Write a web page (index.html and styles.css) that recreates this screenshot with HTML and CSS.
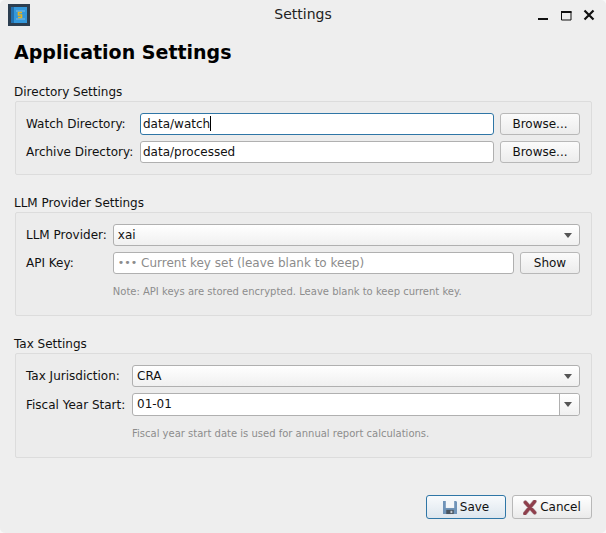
FILE: index.html
```html
<!DOCTYPE html>
<html lang="en">
<head>
  <meta charset="UTF-8">
  <meta name="viewport" content="width=device-width, initial-scale=1.0">
  <title>Settings</title>
  <link rel="stylesheet" href="styles.css">
</head>
<body>
  <div class="window">

    <div class="titlebar">
      <svg class="app-icon" width="22" height="22" viewBox="0 0 22 22">
        <rect width="22" height="22" fill="#2c3e50"/>
        <rect x="3" y="3" width="16" height="16" fill="#3498db"/>
        <rect x="3" y="3" width="3" height="16" fill="#2271b0"/>
        <path d="M8 7h9M8 15h9" stroke="#7dbce8" stroke-width="1"/>
        <path d="M14 8.500h-3.500v2.500h3v2.500h-3.500" fill="none" stroke="#e6b422" stroke-width="1.600"/>
      </svg>
      <span class="titlebar-title">Settings</span>
      <div class="window-buttons">
        <svg width="12" height="12" viewBox="0 0 12 12"><rect x="1" y="9" width="10" height="2" fill="#111"/></svg>
        <svg width="12" height="12" viewBox="0 0 12 12"><path d="M1.500 2.500h9.500v8.500h-9.500z" fill="none" stroke="#111"/><rect x="1" y="2" width="10.500" height="2" fill="#111"/></svg>
        <svg width="12" height="12" viewBox="0 0 12 12"><path d="M1.500 1.500l9 9M10.500 1.500l-9 9" stroke="#111" stroke-width="2.200"/></svg>
      </div>
    </div>

    <div class="content">
      <h1>Application Settings</h1>

      <section class="group group-directory">
        <h2>Directory Settings</h2>
        <div class="group-box">
          <label>Watch Directory:</label>
          <div class="field field-focus">data/watch<span class="caret"></span></div>
          <button class="btn">Browse...</button>
          <label>Archive Directory:</label>
          <div class="field">data/processed</div>
          <button class="btn">Browse...</button>
        </div>
      </section>

      <section class="group group-llm">
        <h2>LLM Provider Settings</h2>
        <div class="group-box">
          <label>LLM Provider:</label>
          <div class="combo span-2">xai<span class="arrow"></span></div>
          <label>API Key:</label>
          <div class="field placeholder"><span class="dots">•••</span> Current key set (leave blank to keep)</div>
          <button class="btn">Show</button>
          <p class="note span-2">Note: API keys are stored encrypted. Leave blank to keep current key.</p>
        </div>
      </section>

      <section class="group group-tax">
        <h2>Tax Settings</h2>
        <div class="group-box">
          <label>Tax Jurisdiction:</label>
          <div class="combo">CRA<span class="arrow"></span></div>
          <label>Fiscal Year Start:</label>
          <div class="field field-combo">01-01<span class="combo-button"><span class="arrow"></span></span></div>
          <p class="note">Fiscal year start date is used for annual report calculations.</p>
        </div>
      </section>

      <div class="actions">
        <button class="btn btn-default">
          <svg width="14" height="15" viewBox="0 0 15 16">
            <path d="M0 1h14l1 1v13h-15z" fill="#6f93b8"/>
            <rect x="3" y="1" width="9" height="7.500" fill="#f4f6f8"/>
            <rect x="3.500" y="10.500" width="8" height="4.500" fill="#4a5560"/>
            <rect x="8" y="11.500" width="2" height="2.500" fill="#c9ced3"/>
          </svg>
          Save
        </button>
        <button class="btn">
          <svg width="14" height="15" viewBox="0 0 15 16">
            <path d="M2.500 2.500l10 11M12.500 1.500l-10.500 13" stroke="#b9a9ac" stroke-width="4.600" stroke-linecap="round"/>
            <path d="M2.500 2.500l10 11M12.500 1.500l-10.500 13" stroke="#8f3f4c" stroke-width="3.400" stroke-linecap="round"/>
          </svg>
          Cancel
        </button>
      </div>
    </div>

  </div>
</body>
</html>
```

FILE: styles.css
```css
html, body {
  margin: 0;
  padding: 0;
  background-color: #f8f8f8;
}
body {
  font-family: "DejaVu Sans", sans-serif;
  font-size: 12px;
  color: #111;
}
.window {
  display: flex;
  flex-direction: column;
  width: 606px;
  height: 533px;
  overflow: hidden;
  border-radius: 5px;
  background-color: #eeeeee;
}
.titlebar {
  display: grid;
  grid-template-columns: 1fr auto 1fr;
  align-items: center;
  flex: none;
  height: 30px;
  padding: 0 8px;
}
.titlebar-title {
  padding-bottom: 2px;
  font-size: 14px;
  color: #222;
}
.window-buttons {
  display: flex;
  justify-self: end;
  gap: 11px;
  margin-right: 3px;
}
.content {
  display: flex;
  flex-direction: column;
  flex: 1;
  padding: 0 14px 14px;
}
h1 {
  margin: 10px 0 0;
  font-size: 19px;
  line-height: 25px;
  color: #000;
}
h2 {
  margin: 0 0 1px;
  font-size: 12px;
  font-weight: normal;
  line-height: 15px;
}
.group-directory {
  margin-top: 20px;
}
.group-llm, .group-tax {
  margin-top: 21px;
}
.group-box {
  display: grid;
  grid-template-columns: auto 1fr auto;
  align-items: center;
  gap: 6px;
  margin-left: 1px;
  padding: 11px 11px 11px 10px;
  border: 1px solid #dcdcdc;
  border-radius: 2px;
  background-color: #ececec;
}
.group-directory .group-box {
  grid-template-columns: 108px 1fr auto;
}
.group-tax .group-box {
  grid-template-columns: 100px 1fr;
}
.span-2 {
  grid-column: span 2;
}
label {
  white-space: nowrap;
}
.field, .combo {
  display: flex;
  align-items: center;
  position: relative;
  height: 22px;
  box-sizing: border-box;
  padding: 0 2px 1px;
  border: 1px solid #b0b0b0;
  border-radius: 3px;
  background-color: #fff;
}
.field-focus {
  border-color: #2f76a6;
}
.caret {
  width: 1px;
  height: 15px;
  background-color: #000;
}
.placeholder {
  padding-left: 4px;
  color: #8c8c8c;
  white-space: pre;
}
.dots {
  font-size: 11px;
}
.combo {
  padding-left: 4px;
  background: linear-gradient(#ffffff, #f0f0f0);
}
.arrow {
  position: absolute;
  right: 7px;
  top: 8px;
  width: 0;
  height: 0;
  border-left: 4px solid transparent;
  border-right: 4px solid transparent;
  border-top: 5px solid #555;
}
.field-combo {
  height: 23px;
  padding-left: 4px;
}
.combo-button {
  position: absolute;
  top: 0;
  right: 0;
  bottom: 0;
  width: 20px;
  box-sizing: border-box;
  border-left: 1px solid #b0b0b0;
  border-radius: 0 3px 3px 0;
  background: linear-gradient(#ffffff, #f0f0f0);
}
.btn {
  display: inline-flex;
  align-items: center;
  justify-content: center;
  gap: 3px;
  height: 22px;
  width: 80px;
  padding: 0;
  border: 1px solid #b8b8b8;
  border-radius: 3px;
  background: linear-gradient(#fbfbfb, #ececec);
  font-family: inherit;
  font-size: 12px;
  color: #111;
}
.group-llm .btn {
  width: 60px;
}
.note {
  grid-column-start: 2;
  margin: 5px 0 6px;
  font-size: 10px;
  line-height: 13px;
  color: #8c8c8c;
}
.actions {
  display: flex;
  justify-content: flex-end;
  gap: 6px;
  margin-top: auto;
}
.actions .btn {
  height: 24px;
  background: linear-gradient(#ffffff, #eaeaea);
}
.actions .btn-default {
  border-color: #2f76a6;
  background: linear-gradient(#f8fafc, #dde6ee);
}
```
